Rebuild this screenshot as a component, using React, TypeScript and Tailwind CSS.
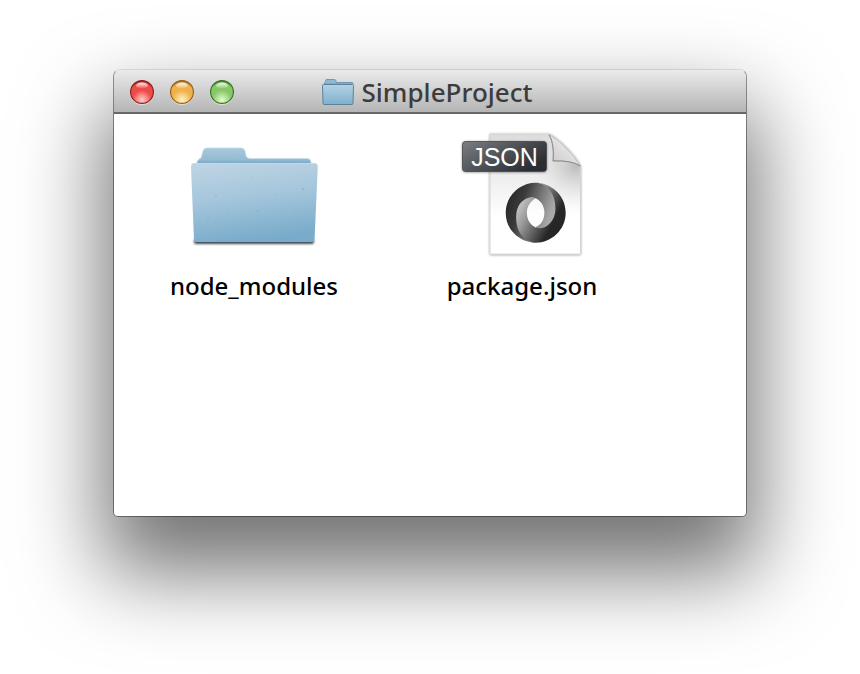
import { useId, type ReactNode } from "react";

function FolderIcon({ className }: { className?: string }) {
  const id = useId();
  return (
    <svg viewBox="0 0 128 128" className={className} aria-hidden="true">
      <defs>
        <linearGradient id={`${id}f`} x1="0.2" y1="0" x2="0.4" y2="1">
          <stop offset="0" stopColor="#bdd4e3" />
          <stop offset="0.45" stopColor="#a5c6dc" />
          <stop offset="0.8" stopColor="#88b5d0" />
          <stop offset="1" stopColor="#79abca" />
        </linearGradient>
        <linearGradient id={`${id}b`} x1="0" y1="0" x2="0" y2="1">
          <stop offset="0" stopColor="#a9c9dc" />
          <stop offset="0.7" stopColor="#93bbd2" />
          <stop offset="1" stopColor="#6a9fc0" />
        </linearGradient>
        <filter id={`${id}s`} x="-10%" y="-200%" width="120%" height="500%">
          <feGaussianBlur stdDeviation="1" />
        </filter>
      </defs>
      <rect x="4" y="109" width="120" height="5" rx="2" fill="#1c2a35" opacity="0.85" filter={`url(#${id}s)`} />
      <path d="M7 35V32Q8 29 11 28Q12 25 13 21Q14 18 17 18H51Q54 18 55 21L56 26Q57 28.500 60 28.500H117Q121 28.500 121 32V35Z" fill={`url(#${id}b)`} stroke="#c3dae7" strokeWidth="0.8" />
      <path d="M4.500 33H124Q128 33 127.800 37L124.500 110Q124.400 112 122 112H6.500Q4.200 112 4 110L1 37Q1 33 4.500 33Z" fill={`url(#${id}f)`} />
      <path d="M1.500 37Q1.500 33.500 5 33.500H124Q127.500 33.500 127.500 37" fill="none" stroke="#c6dae7" strokeWidth="0.8" />
      <g fill="#5f8fb2" opacity="0.4">
        <circle cx="62" cy="47" r="0.6" /><circle cx="113" cy="59" r="0.9" /><circle cx="26" cy="66" r="0.7" />
        <circle cx="68" cy="81" r="0.8" /><circle cx="48" cy="96" r="0.6" /><circle cx="93" cy="108" r="0.7" />
        <circle cx="87" cy="64" r="0.6" /><circle cx="18" cy="88" r="0.7" /><circle cx="104" cy="78" r="0.6" />
        <circle cx="44" cy="24" r="0.6" /><circle cx="79" cy="55" r="0.5" /><circle cx="37" cy="79" r="0.6" />
      </g>
    </svg>
  );
}

function SmallFolderIcon() {
  return (
    <svg viewBox="0 0 32 28" className="h-7 w-8" aria-hidden="true">
      <defs>
        <linearGradient id="smallFolder" x1="0" y1="0" x2="0" y2="1">
          <stop offset="0" stopColor="#b4d2e4" />
          <stop offset="1" stopColor="#7fb0cd" />
        </linearGradient>
      </defs>
      <path d="M2.500 6V4.500L3.500 3.500V2.500Q3.500 1.500 5 1.500H12.500Q13.500 1.500 13.800 2.500L14.300 4.500H30Q31 4.500 31 6Z" fill="#8db9d2" stroke="#6f9ab5" />
      <path d="M0.500 7.500Q0.500 6.500 1.500 6.500H30.500Q31.500 6.500 31.500 7.500L31 25Q31 26.500 30 26.500H2Q1 26.500 1 25Z" fill="url(#smallFolder)" stroke="#5c8299" />
    </svg>
  );
}

function JsonIcon({ className }: { className?: string }) {
  return (
    <svg viewBox="0 0 128 128" className={className} aria-hidden="true">
      <defs>
        <linearGradient id="sheet" x1="0" y1="0" x2="0" y2="1">
          <stop offset="0" stopColor="#dcdcdc" />
          <stop offset="0.3" stopColor="#ebebeb" />
          <stop offset="0.7" stopColor="#ffffff" />
        </linearGradient>
        <radialGradient id="curlShade" gradientUnits="userSpaceOnUse" cx="118" cy="36" r="42">
          <stop offset="0" stopColor="#aaa" stopOpacity="0.7" />
          <stop offset="1" stopColor="#ddd" stopOpacity="0" />
        </radialGradient>
        <linearGradient id="curl" x1="0" y1="1" x2="0.55" y2="0.45">
          <stop offset="0" stopColor="#c6c6c6" />
          <stop offset="1" stopColor="#e2e2e2" />
        </linearGradient>
        <linearGradient id="badge" x1="0" y1="0" x2="1" y2="0.6">
          <stop offset="0" stopColor="#7b7e82" />
          <stop offset="0.45" stopColor="#55595e" />
          <stop offset="1" stopColor="#292d32" />
        </linearGradient>
        <linearGradient id="ringA" gradientUnits="userSpaceOnUse" x1="10" y1="50" x2="130" y2="90">
          <stop offset="0" stopColor="#2c2c2c" />
          <stop offset="0.25" stopColor="#3a3a3a" />
          <stop offset="0.6" stopColor="#777" />
          <stop offset="0.9" stopColor="#a8a8a8" />
        </linearGradient>
        <linearGradient id="ringB" gradientUnits="userSpaceOnUse" x1="30" y1="60" x2="135" y2="115">
          <stop offset="0" stopColor="#c8c8c8" />
          <stop offset="0.3" stopColor="#9a9a9a" />
          <stop offset="0.55" stopColor="#6a6a6a" />
          <stop offset="0.9" stopColor="#262626" />
        </linearGradient>
        <filter id="soft" x="-20%" y="-20%" width="140%" height="140%">
          <feDropShadow dx="0" dy="0.5" stdDeviation="1.2" floodColor="#000" floodOpacity="0.45" />
        </filter>
      </defs>
      <path d="M32 4H91Q97 6 108 17Q119 28 122.500 36V124H32Z" fill="url(#sheet)" stroke="#d0d0d0" strokeWidth="0.8" filter="url(#soft)" />
      <path d="M76 4.500H91L122 36V80H76Z" fill="url(#curlShade)" />
      <path d="M91 4.500C95 11 96 22 95 31Q112 30 122.500 36Q117 27 107 17Q97 7 91 4.500Z" fill="url(#curl)" stroke="#aaa" strokeWidth="0.6" />
      <path d="M91 5C95 11 96 22 95 31Q113 30 122.500 36" fill="none" stroke="#8a8a8a" strokeWidth="1" />
      <rect x="4.500" y="11.500" width="84" height="30" rx="3" fill="url(#badge)" stroke="#43474b" strokeWidth="0.8" filter="url(#soft)" />
      <text x="46.500" y="36" textAnchor="middle" fontSize="25" fill="#fff" className="font-['Liberation_Sans',Arial,sans-serif]">JSON</text>
      <g transform="translate(47.700 52.700) scale(0.375)">
        <path fill="url(#ringA)" d="M79.865,119.1c35.398,48.255,70.04-13.469,69.989-50.587C149.794,24.627,105.312,0.1,79.836,0.1C38.944,0.1,0,33.895,0,80.136C0,131.531,44.64,160,79.836,160c-7.965-1.147-34.506-6.834-34.863-67.967c-0.239-41.347,13.488-57.866,34.805-50.599c0.477,0.177,23.514,9.265,23.514,38.951C103.292,109.946,79.865,119.1,79.865,119.1z" />
        <path fill="url(#ringB)" d="M79.823,41.401C56.433,33.339,27.78,52.618,27.78,91.23c0,63.048,46.72,68.77,52.384,68.77C121.057,160,160,126.204,160,79.964C160,28.568,115.36,0.1,80.164,0.1c9.748-1.35,52.541,10.55,52.541,69.037c0,38.141-31.953,58.905-52.735,50.033c-0.477-0.177-23.514-9.264-23.514-38.951C56.456,52.659,79.823,41.401,79.823,41.401z" />
      </g>
    </svg>
  );
}

function WindowButton({ label, edge, mid, glow }: { label: string; edge: string; mid: string; glow: string }) {
  const id = useId();
  return (
    <button type="button" aria-label={label} className="size-6">
      <svg viewBox="0 0 24 24" className="size-6 overflow-visible" aria-hidden="true">
        <defs>
          <radialGradient id={`${id}a`} cx="0.5" cy="0.85" r="0.85">
            <stop offset="0" stopColor={glow} />
            <stop offset="0.5" stopColor={mid} />
            <stop offset="0.8" stopColor={mid} />
            <stop offset="1" stopColor={edge} />
          </radialGradient>
          <linearGradient id={`${id}h`} x1="0" y1="0" x2="0" y2="1">
            <stop offset="0" stopColor="#fff" stopOpacity="0.95" />
            <stop offset="1" stopColor="#fff" stopOpacity="0.05" />
          </linearGradient>
        </defs>
        <circle cx="12" cy="13" r="12" fill="#fff" opacity="0.5" />
        <circle cx="12" cy="12" r="11.400" fill={`url(#${id}a)`} stroke={edge} strokeWidth="1.200" />
        <ellipse cx="12" cy="5.500" rx="6" ry="3" fill={`url(#${id}h)`} />
      </svg>
    </button>
  );
}

function FileItem({ name, children }: { name: string; children: ReactNode }) {
  return (
    <li>
      <button type="button" className="flex w-[268px] flex-col items-center gap-2">
        {children}
        <span className="text-[24px] leading-10 font-medium text-black">{name}</span>
      </button>
    </li>
  );
}

export default function App() {
  return (
    <div className="min-h-screen overflow-hidden bg-white px-[113px] pt-[69px] pb-[157px] font-['Noto_Sans','Open_Sans',sans-serif]">
      <main className="overflow-hidden rounded-t-lg rounded-b-[5px] border border-black/40 border-t-black/10 bg-white bg-clip-padding shadow-[0_46px_84px_10px_rgba(0,0,0,0.55)]">
        <header className="grid h-11 grid-cols-[1fr_auto_1fr] items-center border-b-2 border-[#686868] bg-linear-to-b from-[#ebebeb] to-[#b5b5b5] pt-[2px] pr-[22px] pl-4">
          <div className="flex gap-4">
            <WindowButton label="Close" edge="#8c211f" mid="#ef4a47" glow="#ffd0cc" />
            <WindowButton label="Minimize" edge="#96611c" mid="#f0b04a" glow="#fff6c4" />
            <WindowButton label="Zoom" edge="#3b7426" mid="#86c868" glow="#e2ffc8" />
          </div>
          <div className="flex items-center gap-2">
            <SmallFolderIcon />
            <h1 className="text-[26px] leading-10 font-medium text-[#3c3c3c]">SimpleProject</h1>
          </div>
        </header>
        <ul className="flex min-h-[402px] flex-wrap content-start px-[6px] pt-4">
          <FileItem name="node_modules"><FolderIcon className="size-32" /></FileItem>
          <FileItem name="package.json"><JsonIcon className="size-32" /></FileItem>
        </ul>
      </main>
    </div>
  );
}
